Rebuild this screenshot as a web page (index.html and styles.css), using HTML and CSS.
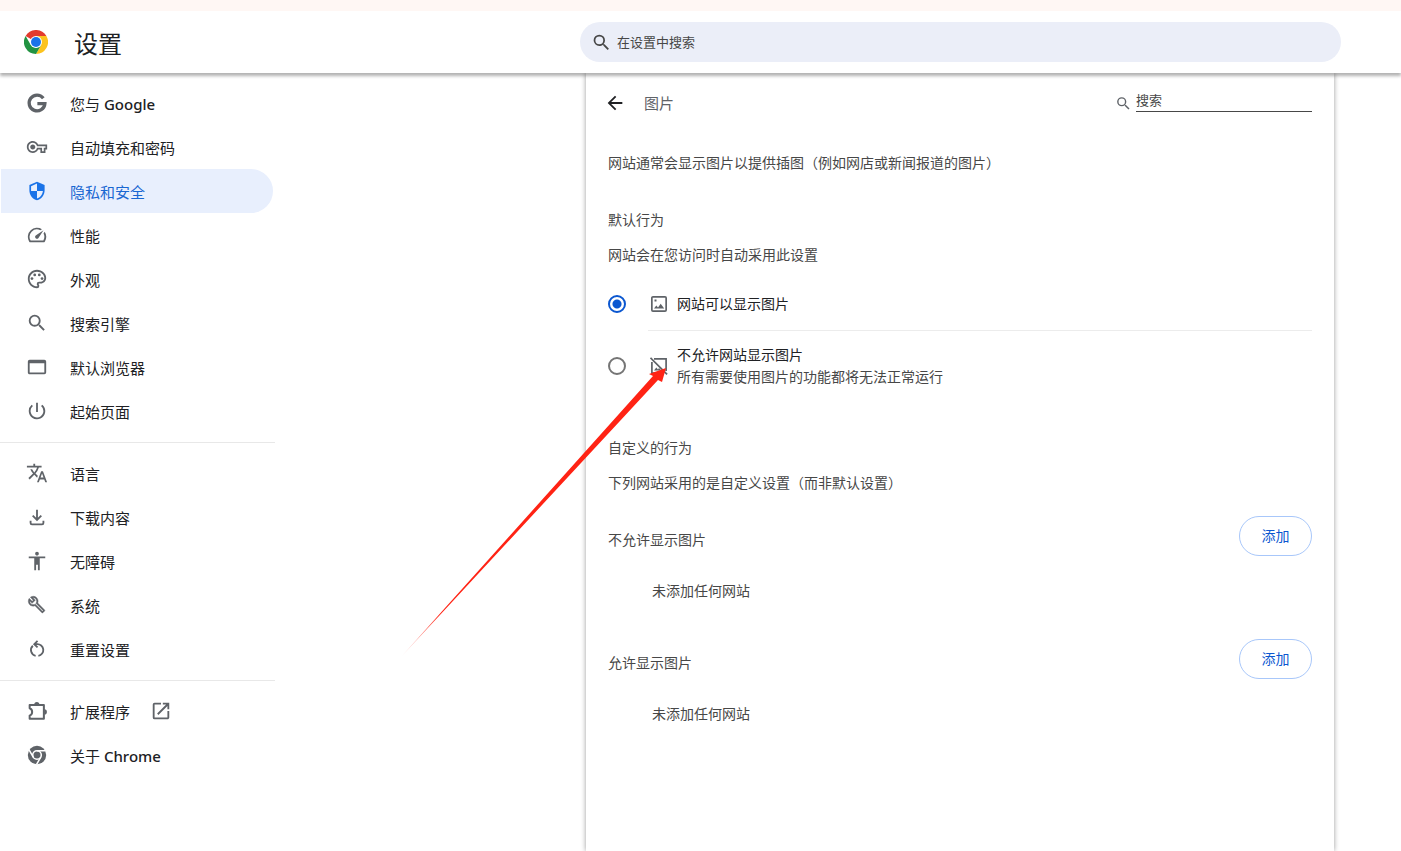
FILE: index.html
```html
<!DOCTYPE html>
<html lang="zh-CN">
<head>
<meta charset="utf-8">
<title>设置</title>
<link rel="stylesheet" href="styles.css">
</head>
<body>
<div class="strip"></div>
<header class="toolbar">
  <svg class="logo" viewBox="0 0 48 48" aria-hidden="true">
    <path fill="#e33b2e" d="M24 24 3.2 12A24 24 0 0 1 44.8 12z"/>
    <path fill="#fcc31e" d="M44.8 12A24 24 0 0 1 24 48L34.4 30 24 12z"/>
    <path fill="#229342" d="M24 48A24 24 0 0 1 3.2 12L13.6 30 24 36l10.4-6z"/>
    <circle cx="24" cy="24" r="12" fill="#fff"/>
    <circle cx="24" cy="24" r="10" fill="#1a73e8"/>
  </svg>
  <h1 class="title">设置</h1>
  <label class="search">
    <svg class="search-icon" viewBox="0 0 24 24" aria-hidden="true"><path d="M15.5 14h-.79l-.28-.27A6.47 6.47 0 0 0 16 9.5 6.5 6.5 0 1 0 9.5 16c1.61 0 3.09-.59 4.23-1.57l.27.28v.79l5 4.99L20.49 19l-4.99-5zm-6 0a4.5 4.5 0 1 1 0-9 4.5 4.5 0 0 1 0 9z"/></svg>
    <input class="search-input" type="text" placeholder="在设置中搜索" aria-label="在设置中搜索">
  </label>
</header>
<div class="layout">
  <nav class="sidebar">
    <a class="item" href="#"><svg class="icon" viewBox="0 0 24 24"><path d="M18.9 6.800A8.600 8.600 0 1 0 20.600 12.600H12.400" fill="none" stroke="currentColor" stroke-width="3.600"/></svg><span>您与 <span class="latin">Google</span></span></a>
    <a class="item" href="#"><svg class="icon" viewBox="-1 -1 26 26"><path d="M22 19h-6v-4h-2.68c-1.14 2.42-3.6 4-6.32 4-3.86 0-7-3.14-7-7s3.14-7 7-7c2.72 0 5.17 1.58 6.32 4H24v6h-2v4zm-4-2h2v-4h2v-2H11.94l-.23-.67C11.01 8.34 9.11 7 7 7c-2.76 0-5 2.24-5 5s2.24 5 5 5c2.11 0 4.01-1.34 4.71-3.33l.23-.67H18v4zM7 15c-1.65 0-3-1.35-3-3s1.35-3 3-3 3 1.35 3 3-1.35 3-3 3z"/></svg><span>自动填充和密码</span></a>
    <a class="item selected" href="#" aria-current="page"><svg class="icon" viewBox="-1 -1 26 26"><path d="M12 1L3 5v6c0 5.55 3.84 10.74 9 12 5.16-1.26 9-6.45 9-12V5l-9-4zm0 10.99h7c-.53 4.12-3.28 7.79-7 8.94V12H5V6.3l7-3.11v8.8z"/></svg><span>隐私和安全</span></a>
    <a class="item" href="#"><svg class="icon" viewBox="0 0 24 24"><path d="M20.38 8.57l-1.23 1.85a8 8 0 0 1-.22 7.58H5.07A8 8 0 0 1 15.58 6.85l1.85-1.23A10 10 0 0 0 3.35 19a2 2 0 0 0 1.72 1h13.85a2 2 0 0 0 1.74-1 10 10 0 0 0-.27-10.44zm-9.79 6.84a2 2 0 0 0 2.83 0l5.66-8.49-8.49 5.66a2 2 0 0 0 0 2.83z"/></svg><span>性能</span></a>
    <a class="item" href="#"><svg class="icon" viewBox="0 0 24 24"><path d="M12 22C6.49 22 2 17.51 2 12S6.49 2 12 2s10 4.04 10 9c0 3.31-2.69 6-6 6h-1.77c-.28 0-.5.22-.5.5 0 .12.05.23.13.33.41.47.64 1.06.64 1.67A2.5 2.5 0 0 1 12 22zm0-18c-4.41 0-8 3.59-8 8s3.59 8 8 8c.28 0 .5-.22.5-.5a.54.54 0 0 0-.14-.35c-.41-.46-.63-1.05-.63-1.65a2.5 2.5 0 0 1 2.5-2.5H16c2.21 0 4-1.79 4-4 0-3.86-3.59-7-8-7z"/><circle cx="6.5" cy="11.5" r="1.5"/><circle cx="9.5" cy="7.5" r="1.5"/><circle cx="14.5" cy="7.5" r="1.5"/><circle cx="17.5" cy="11.5" r="1.5"/></svg><span>外观</span></a>
    <a class="item" href="#"><svg class="icon" viewBox="0 0 24 24"><path d="M15.5 14h-.79l-.28-.27A6.47 6.47 0 0 0 16 9.5 6.5 6.5 0 1 0 9.5 16c1.61 0 3.09-.59 4.23-1.57l.27.28v.79l5 4.99L20.49 19l-4.99-5zm-6 0a4.5 4.5 0 1 1 0-9 4.5 4.5 0 0 1 0 9z"/></svg><span>搜索引擎</span></a>
    <a class="item" href="#"><svg class="icon" viewBox="0 0 24 24"><path d="M20 4H4a2 2 0 0 0-2 2v12c0 1.1.9 2 2 2h16a2 2 0 0 0 2-2V6a2 2 0 0 0-2-2zm0 14H4V8h16v10z"/></svg><span>默认浏览器</span></a>
    <a class="item" href="#"><svg class="icon" viewBox="0 0 24 24"><path d="M13 3h-2v10h2V3zm4.83 2.17l-1.42 1.42A6.92 6.92 0 0 1 19 12a7 7 0 1 1-11.42-5.42L6.17 5.17A8.93 8.93 0 0 0 3 12a9 9 0 1 0 14.83-6.83z"/></svg><span>起始页面</span></a>
    <hr class="rule">
    <a class="item" href="#"><svg class="icon" viewBox="0 0 24 24"><path d="M12.87 15.07l-2.54-2.51.03-.03A17.52 17.52 0 0 0 14.07 6H17V4h-7V2H8v2H1v2h11.17C11.5 7.92 10.44 9.75 9 11.35 8.07 10.32 7.3 9.19 6.69 8h-2c.73 1.63 1.73 3.17 2.98 4.56l-5.09 5.02L4 19l5-5 3.11 3.11.76-2.04zM18.5 10h-2L12 22h2l1.12-3h4.75L21 22h2l-4.5-12zm-2.62 7l1.62-4.33L19.12 17h-3.24z"/></svg><span>语言</span></a>
    <a class="item" href="#"><svg class="icon" viewBox="0 0 24 24"><path d="M12 4v11M7.3 10.5 12 15.2l4.7-4.7M5 16v2.5c0 .8.6 1.5 1.5 1.5h11c.9 0 1.5-.7 1.5-1.5V16" fill="none" stroke="currentColor" stroke-width="2"/></svg><span>下载内容</span></a>
    <a class="item" href="#"><svg class="icon" viewBox="0 0 24 24"><path d="M12 2c1.1 0 2 .9 2 2s-.9 2-2 2-2-.9-2-2 .9-2 2-2zm9 7h-6v13h-2v-6h-2v6H9V9H3V7h18v2z"/></svg><span>无障碍</span></a>
    <a class="item" href="#"><svg class="icon" viewBox="-2 -2 29 29"><path d="M22.61 18.99l-9.08-9.08c.93-2.34.45-5.1-1.44-7C9.79.61 6.21.4 3.66 2.26L7.5 6.11 6.08 7.52 2.25 3.69C.39 6.23.6 9.82 2.9 12.11c1.86 1.86 4.57 2.35 6.89 1.48l9.11 9.11c.39.39 1.02.39 1.41 0l2.3-2.3c.4-.38.4-1.01 0-1.41zm-3 1.6l-9.46-9.46c-.61.45-1.29.72-2 .82-1.36.2-2.79-.21-3.83-1.25C3.37 9.76 2.93 8.5 3 7.26l3.09 3.09 4.24-4.24-3.09-3.09c1.24-.07 2.49.37 3.44 1.31 1.08 1.08 1.49 2.57 1.24 3.96-.12.71-.42 1.37-.88 1.96l9.45 9.45-.88.89z" stroke="currentColor" stroke-width=".5"/></svg><span>系统</span></a>
    <a class="item" href="#"><svg class="icon" viewBox="0 0 24 24"><path d="M7.500 8.400A6.400 6.400 0 0 0 10.500 19.400M13.500 19.400A6.400 6.400 0 0 0 12 6.700H9.500M12.600 3.200 9 6.700l3.600 3.600" fill="none" stroke="currentColor" stroke-width="2"/></svg><span>重置设置</span></a>
    <hr class="rule">
    <a class="item" href="#"><svg class="icon" viewBox="0 0 24 24"><path d="M4 5.500h15.500v15H4V17c3.600-1.500 3.600-6.500 0-8z" fill="none" stroke="currentColor" stroke-width="2.200" stroke-linejoin="round"/><path d="M9 5a2.800 2.800 0 0 1 5.600 0zM20 10.200a2.800 2.800 0 0 1 0 5.600z"/></svg><span>扩展程序</span><svg class="icon external" viewBox="0 0 24 24"><path d="M19 19H5V5h7V3H5a2 2 0 0 0-2 2v14a2 2 0 0 0 2 2h14c1.1 0 2-.9 2-2v-7h-2v7zM14 3v2h3.59l-9.83 9.83 1.41 1.41L19 6.41V10h2V3h-7z"/></svg></a>
    <a class="item" href="#"><svg class="icon" viewBox="0 0 24 24"><circle cx="12" cy="12" r="10"/><circle cx="12" cy="12" r="4.7" fill="none" stroke="#fff" stroke-width="1.7"/><path d="M12 7.3h9.500M7.900 14.300 3.200 6.200M16.100 14.300l-4.700 8.200" stroke="#fff" stroke-width="1.700"/></svg><span>关于 <span class="latin">Chrome</span></span></a>
  </nav>
  <main class="card">
    <div class="card-head">
      <button class="back" type="button" aria-label="返回"><svg class="back-icon" viewBox="0 0 24 24"><path d="M20 11H7.83l5.59-5.59L12 4l-8 8 8 8 1.41-1.41L7.83 13H20v-2z"/></svg></button>
      <h2 class="page-title">图片</h2>
      <label class="find">
        <svg class="find-icon" viewBox="0 0 24 24" aria-hidden="true"><path d="M15.5 14h-.79l-.28-.27A6.47 6.47 0 0 0 16 9.5 6.5 6.5 0 1 0 9.5 16c1.61 0 3.09-.59 4.23-1.57l.27.28v.79l5 4.99L20.49 19l-4.99-5zm-6 0a4.5 4.5 0 1 1 0-9 4.5 4.5 0 0 1 0 9z"/></svg>
        <input class="find-input" type="text" placeholder="搜索" aria-label="搜索">
      </label>
    </div>
    <p class="intro">网站通常会显示图片以提供插图（例如网店或新闻报道的图片）</p>
    <h3 class="heading">默认行为</h3>
    <p class="note">网站会在您访问时自动采用此设置</p>
    <div class="options">
      <label class="option">
        <input class="radio" type="radio" name="images" checked>
        <span class="option-body first">
          <svg class="option-icon" viewBox="0 0 18 18"><path fill-rule="evenodd" d="M3 1h12a2 2 0 0 1 2 2v12a2 2 0 0 1-2 2H3a2 2 0 0 1-2-2V3c0-1.1.9-2 2-2zm-.3 1.7v12.600h12.600V2.700z"/><path d="M4 13.500l2.300-3 1.700 2 2.700-3.800 3.500 4.800zM4.500 4.500h2v2h-2z"/></svg>
          <span>网站可以显示图片</span>
        </span>
      </label>
      <label class="option">
        <input class="radio" type="radio" name="images">
        <span class="option-body second">
          <svg class="option-icon" viewBox="0 0 18 18"><path d="M4 1.900h12.100V14M1.900 5v11.100H13M.5.800l16.600 16.600" fill="none" stroke="currentColor" stroke-width="1.700"/><path d="M4 13.500l2.300-3 1.700 2 1-1.500 2.500 2.500z"/></svg>
          <span>不允许网站显示图片<br><span class="sub">所有需要使用图片的功能都将无法正常运行</span></span>
        </span>
      </label>
    </div>
    <h3 class="heading">自定义的行为</h3>
    <p class="note">下列网站采用的是自定义设置（而非默认设置）</p>
    <section class="sites">
      <div class="sites-head"><h3 class="sites-title">不允许显示图片</h3><button class="add" type="button">添加</button></div>
      <p class="empty">未添加任何网站</p>
    </section>
    <section class="sites">
      <div class="sites-head"><h3 class="sites-title">允许显示图片</h3><button class="add" type="button">添加</button></div>
      <p class="empty">未添加任何网站</p>
    </section>
  </main>
</div>
<svg class="pointer" viewBox="0 0 270 295" aria-hidden="true">
  <defs><linearGradient id="fade" x1="0" y1="1" x2="1" y2="0"><stop offset="0" stop-color="#ff2314" stop-opacity="0.1"/><stop offset="0.15" stop-color="#ff2314"/></linearGradient></defs>
  <path fill="url(#fade)" d="M0 294 252 13 248 11 265 5 261 19 257 17z"/>
</svg>
</body>
</html>
```

FILE: styles.css
```css
* { box-sizing: border-box; }
body {
  margin: 0;
  min-height: 100vh;
  display: flex;
  flex-direction: column;
  overflow: hidden;
  background: #fff;
  color: #202124;
  font: 14px/20px "Noto Sans", "Noto Sans CJK SC", sans-serif;
}
h1, h2, h3, p { margin: 0; font-weight: 400; }
svg { display: block; flex: none; fill: currentColor; }
input, button { font: inherit; color: inherit; }

.strip { height: 11px; background: #fff7f4; }
.toolbar {
  position: relative;
  z-index: 1;
  display: flex;
  align-items: center;
  height: 62px;
  padding: 0 60px 0 24px;
  background: #fff;
  box-shadow: 0 3px 3px rgba(0, 0, 0, .3);
}
.logo { width: 24px; height: 24px; }
.title { margin-left: 26px; padding-top: 4px; font-size: 24px; line-height: 32px; }
.search {
  display: flex;
  align-items: center;
  gap: 5px;
  width: 761px;
  height: 40px;
  margin-left: auto;
  padding: 0 11px;
  border-radius: 20px;
  background: #ebeef8;
  color: #474747;
}
.search-icon { width: 21px; height: 21px; }
.search-input { flex: 1; min-width: 0; padding: 0; border: 0; outline: 0; background: none; font-size: 13px; }
::placeholder { color: #474747; opacity: 1; }

.layout { flex: 1; display: flex; justify-content: space-between; padding-right: 67px; }
.sidebar { flex: none; width: 275px; padding-top: 8px; }
.item {
  display: flex;
  align-items: center;
  height: 44px;
  margin: 0 2px 0 1px;
  padding-left: 25px;
  border-radius: 0 22px 22px 0;
  color: #202124;
  font-size: 15px;
  text-decoration: none;
}
.item span { padding-top: 1px; }
.item .icon { width: 22px; height: 22px; margin-right: 22px; color: #5f6368; }
.item .external { margin: 0 0 0 20px; }
.item.selected { background: #e8effd; color: #1967d2; }
.item.selected .icon { color: #1a73e8; }
.latin { font-weight: 500; }
.rule { height: 1px; margin: 9px 0 8px; border: 0; background: #e8e8e8; }

.card {
  width: 748px;
  padding: 0 22px;
  box-shadow: 0 0 5px rgba(0, 0, 0, .4);
  color: #474747;
}
.card-head { display: flex; align-items: center; height: 60px; }
.back { padding: 0; border: 0; background: none; color: #202124; }
.back-icon { width: 22px; height: 22px; margin-left: -4px; }
.page-title { margin-left: 18px; font-size: 15px; color: #5f6368; }
.find { display: flex; align-items: center; gap: 4px; margin-left: auto; color: #5f6368; }
.find-icon { width: 17px; height: 17px; }
.find-input {
  width: 176px;
  height: 22px;
  margin-bottom: 4px;
  padding: 0 0 2px;
  border: 0;
  border-bottom: 1px solid #474747;
  outline: 0;
  background: none;
  font-size: 13px;
}
.intro { margin-top: 20px; }
.heading { margin-top: 37px; font-size: 14px; }
.note { margin-top: 15px; }
.options { margin-top: 12px; }
.option { display: flex; align-items: center; color: #202124; }
.radio {
  flex: none;
  width: 18px;
  height: 18px;
  margin: 0 22px 0 0;
  appearance: none;
  border: 2px solid #757575;
  border-radius: 50%;
}
.radio:checked { border-color: #0b57d0; background: radial-gradient(circle, #0b57d0 4px, #fff 5px); }
.option-body { flex: 1; display: flex; align-items: center; gap: 9px; padding-left: 2px; line-height: 22px; }
.first { height: 54px; border-bottom: 1px solid #ececec; }
.second { height: 70px; }
.option-icon { width: 18px; height: 18px; color: #5f6368; }
.sub { color: #474747; }
.sites { margin-top: 23px; }
.sites + .sites { margin-top: 38px; }
.sites-head { display: flex; justify-content: space-between; align-items: center; }
.sites-title { padding-top: 8px; font-size: 14px; }
.add {
  width: 73px;
  height: 40px;
  border: 1px solid #a8c7fa;
  border-radius: 20px;
  background: none;
  color: #0b57d0;
}
.empty { margin-top: 25px; padding-left: 44px; }

.pointer { position: absolute; z-index: 2; left: 401px; top: 363px; width: 270px; height: 295px; pointer-events: none; }
```
